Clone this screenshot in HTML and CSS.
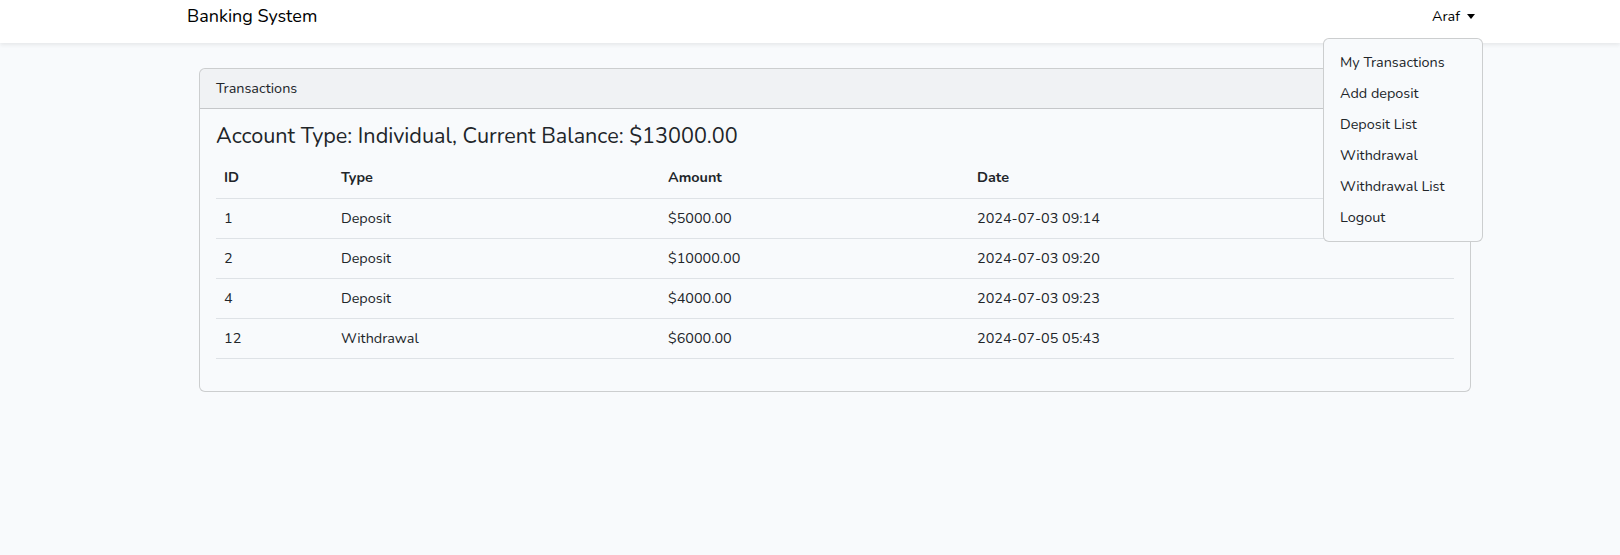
FILE: index.html
```html
<!DOCTYPE html>
<html lang="en">
<head>
<meta charset="utf-8">
<title>Banking System</title>
<link rel="stylesheet" href="styles.css">
</head>
<body>
<nav class="navbar">
  <div class="container nav-inner">
    <a class="brand" href="#">Banking System</a>
    <div class="nav-item">
      <a class="nav-link" href="#">Araf<span class="caret"></span></a>
      <ul class="dropdown">
        <li><a href="#">My Transactions</a></li>
        <li><a href="#">Add deposit</a></li>
        <li><a href="#">Deposit List</a></li>
        <li><a href="#">Withdrawal</a></li>
        <li><a href="#">Withdrawal List</a></li>
        <li><a href="#">Logout</a></li>
      </ul>
    </div>
  </div>
</nav>
<main class="main">
  <div class="container">
    <div class="card">
      <div class="card-header">Transactions</div>
      <div class="card-body">
        <h4 class="balance">Account Type: Individual, Current Balance: $13000.00</h4>
        <table class="table">
          <thead>
            <tr><th class="c-id">ID</th><th class="c-type">Type</th><th class="c-amt">Amount</th><th class="c-date">Date</th></tr>
          </thead>
          <tbody>
            <tr><td>1</td><td>Deposit</td><td>$5000.00</td><td>2024-07-03 09:14</td></tr>
            <tr><td>2</td><td>Deposit</td><td>$10000.00</td><td>2024-07-03 09:20</td></tr>
            <tr><td>4</td><td>Deposit</td><td>$4000.00</td><td>2024-07-03 09:23</td></tr>
            <tr><td>12</td><td>Withdrawal</td><td>$6000.00</td><td>2024-07-05 05:43</td></tr>
          </tbody>
        </table>
      </div>
    </div>
  </div>
</main>
</body>
</html>
```
FILE: styles.css
```css
* { box-sizing: border-box; }
html, body { margin: 0; padding: 0; }
body {
  font-family: Nunito, Lato, "Open Sans", sans-serif;
  font-size: 14.4px;
  line-height: 1.6;
  color: #212529;
  background: #f8fafc;
}
a { text-decoration: none; color: inherit; }

.container {
  width: 1320px;
  margin-left: 175px;
  padding: 0 12px;
}

.navbar {
  background: #fff;
  height: 43px;
  box-shadow: 0 2px 4px rgba(0,0,0,0.075);
  position: relative;
  z-index: 5;
}
.nav-inner {
  display: flex;
  justify-content: space-between;
  align-items: flex-start;
}
.brand {
  font-size: 18px;
  line-height: 29px;
  padding-top: 2px;
  color: #000;
}
.nav-item { position: relative; }
.nav-link {
  display: flex;
  align-items: center;
  padding: 5px 8px 0;
  line-height: 23px;
  color: #000;
}
.caret {
  display: inline-block;
  margin-left: 7px;
  border-top: 5px solid #000;
  border-left: 4px solid transparent;
  border-right: 4px solid transparent;
}
.dropdown {
  position: absolute;
  right: 0;
  top: 38px;
  width: 160px;
  margin: 0;
  padding: 8px 0;
  list-style: none;
  background: #f8fafc;
  border: 1px solid rgba(0,0,0,0.175);
  border-radius: 6px;
}
.dropdown a {
  display: block;
  padding: 4px 16px;
  line-height: 23px;
  color: #212529;
  white-space: nowrap;
}

.main { padding-top: 25px; }
.card {
  margin: 0 12px;
  border: 1px solid rgba(0,0,0,0.175);
  border-radius: 6px;
  background: #f8fafc;
  overflow: hidden;
}
.card-header {
  padding: 8px 16px;
  line-height: 23px;
  background: rgba(0,0,0,0.03);
  border-bottom: 1px solid rgba(0,0,0,0.175);
}
.card-body { padding: 16px; }
.balance {
  margin: -2px 0 10px;
  font-size: 21.6px;
  font-weight: 400;
  line-height: 26px;
}
.table {
  width: 100%;
  border-collapse: collapse;
  table-layout: fixed;
  margin-bottom: 16px;
}
.table th, .table td {
  padding: 8px;
  text-align: left;
  line-height: 23px;
  border-bottom: 1px solid #dee2e6;
}
.table th {
  font-weight: 700;
  padding-top: 7px;
  padding-bottom: 9px;
}
.c-id { width: 117px; }
.c-type { width: 327px; }
.c-amt { width: 309px; }
```
